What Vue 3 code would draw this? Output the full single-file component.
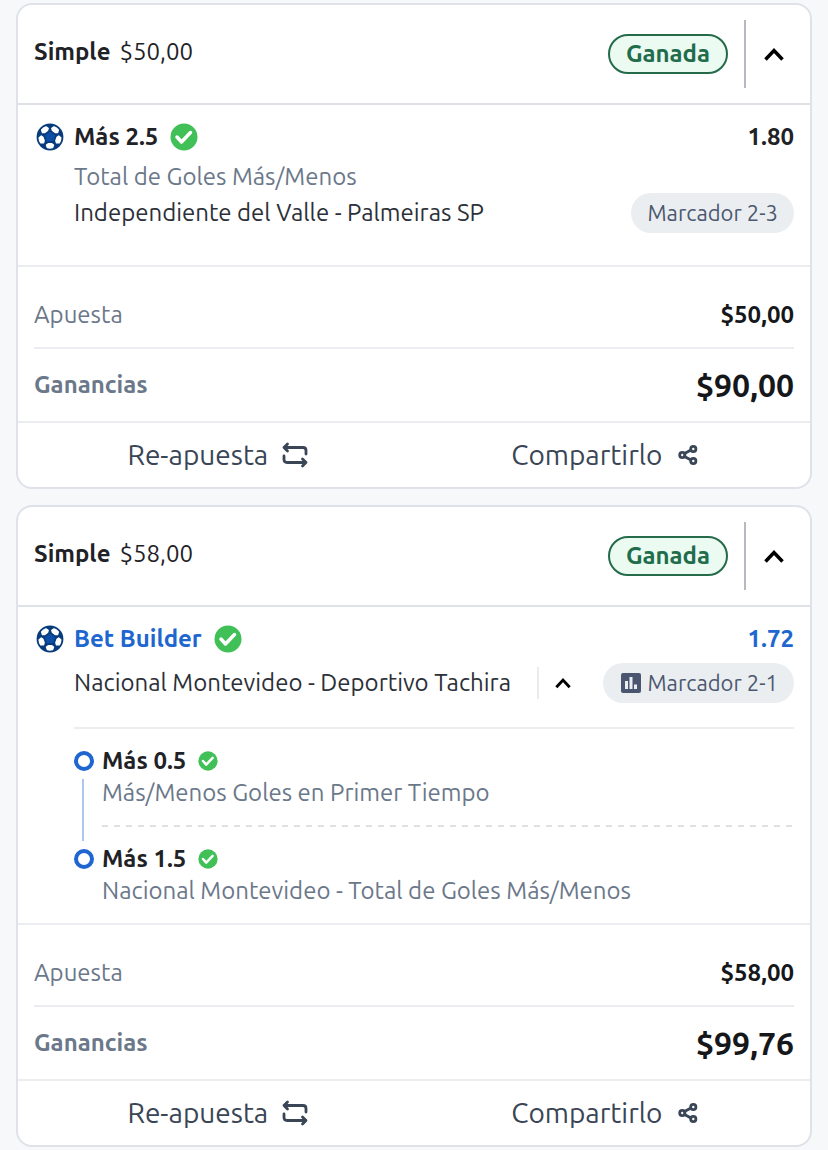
<script setup>
import { reactive } from 'vue'

const bets = reactive([
  {
    id: 1,
    type: 'Simple',
    stake: '$50,00',
    status: 'Ganada',
    open: true,
    title: 'Más 2.5',
    builder: false,
    odds: '1.80',
    market: 'Total de Goles Más/Menos',
    match: 'Independiente del Valle - Palmeiras SP',
    score: 'Marcador 2-3',
    winnings: '$90,00',
    legs: [],
    legsOpen: false,
  },
  {
    id: 2,
    type: 'Simple',
    stake: '$58,00',
    status: 'Ganada',
    open: true,
    title: 'Bet Builder',
    builder: true,
    odds: '1.72',
    market: '',
    match: 'Nacional Montevideo - Deportivo Tachira',
    score: 'Marcador 2-1',
    winnings: '$99,76',
    legs: [
      { pick: 'Más 0.5', market: 'Más/Menos Goles en Primer Tiempo' },
      { pick: 'Más 1.5', market: 'Nacional Montevideo - Total de Goles Más/Menos' },
    ],
    legsOpen: true,
  },
])

const panels = [0, 72, 144, 216, 288]
</script>

<template>
  <main class="bets">
    <article v-for="bet in bets" :key="bet.id" class="bet-card">
      <header class="bet-header">
        <div class="bet-type"><strong>{{ bet.type }}</strong><span>{{ bet.stake }}</span></div>
        <span class="status">{{ bet.status }}</span>
        <button
          type="button"
          class="toggle"
          :aria-expanded="bet.open"
          aria-label="Mostrar detalle"
          @click="bet.open = !bet.open"
        >
          <svg :class="['chevron', { closed: !bet.open }]" viewBox="0 0 24 24">
            <path d="M3.500 17.500L12 8.500L20.500 17.500" />
          </svg>
        </button>
      </header>

      <section v-if="bet.open" class="selection">
        <svg class="ball" viewBox="-14 -14 28 28" aria-hidden="true">
          <circle r="13.400" fill="#073b7c" />
          <path d="M0 -4.800L4.600 -1.500L2.800 3.800H-2.800L-4.600 -1.500Z" fill="#0d4fa6" stroke="#0d4fa6" stroke-linejoin="round" />
          <path
            v-for="a in panels"
            :key="a"
            d="M-1.800 6.800H1.800L3.500 8L2.600 10.500Q0 11.300 -2.600 10.500L-3.500 8Z"
            fill="#fff"
            stroke="#fff"
            stroke-width="1.500"
            stroke-linejoin="round"
            :transform="`rotate(${a})`"
          />
        </svg>

        <div class="selection-body">
          <div class="title-row">
            <strong :class="['title', { blue: bet.builder }]">{{ bet.title }}</strong>
            <svg class="check" viewBox="0 0 28 28" aria-hidden="true">
              <circle cx="14" cy="14" r="13.500" />
              <path d="M7 14L11.500 19L20.500 9.500" />
            </svg>
            <strong :class="['odds', { blue: bet.builder }]">{{ bet.odds }}</strong>
          </div>

          <div v-if="bet.market" class="market">{{ bet.market }}</div>

          <div :class="['match-row', { spaced: bet.builder }]">
            <span class="match">{{ bet.match }}</span>
            <button
              v-if="bet.builder"
              type="button"
              class="toggle small"
              :aria-expanded="bet.legsOpen"
              aria-label="Mostrar selecciones"
              @click="bet.legsOpen = !bet.legsOpen"
            >
              <svg :class="['chevron', { closed: !bet.legsOpen }]" viewBox="0 0 24 24">
                <path d="M4 17L12 8.500L20 17" />
              </svg>
            </button>
            <span class="score">
              <svg v-if="bet.builder" class="stats" viewBox="0 0 20 20" aria-hidden="true">
                <rect width="20" height="20" rx="2" fill="#4a5670" />
                <path d="M4 8h3v8H4zM8.500 4h3v12h-3zM13 11.500h3V16h-3z" fill="#ebeef1" />
              </svg>
              {{ bet.score }}
            </span>
          </div>

          <ul v-if="bet.legs.length && bet.legsOpen" class="legs">
            <li v-for="leg in bet.legs" :key="leg.pick" class="leg">
              <div class="rail">
                <span class="dot"></span>
                <span class="line"></span>
              </div>
              <div class="leg-body">
                <div class="leg-title">
                  <strong>{{ leg.pick }}</strong>
                  <svg class="check small" viewBox="0 0 28 28" aria-hidden="true">
                    <circle cx="14" cy="14" r="13.500" />
                    <path d="M7 14L11.500 19L20.500 9.500" />
                  </svg>
                </div>
                <div class="leg-market">{{ leg.market }}</div>
              </div>
            </li>
          </ul>
        </div>
      </section>

      <dl class="totals">
        <div class="total">
          <dt>Apuesta</dt>
          <dd>{{ bet.stake }}</dd>
        </div>
        <div class="total winnings">
          <dt>Ganancias</dt>
          <dd>{{ bet.winnings }}</dd>
        </div>
      </dl>

      <footer class="actions">
        <button type="button" class="action">
          Re-apuesta
          <svg class="rebet" viewBox="0 0 26 26" aria-hidden="true">
            <path d="M5.500 2L2 5.500L5.500 9M2 5.500H21Q24 5.500 24 8.500V12M20.500 17L24 20.500L20.500 24M24 20.500H5Q2 20.500 2 17.500V14" />
          </svg>
        </button>
        <button type="button" class="action">
          Compartirlo
          <svg class="share" viewBox="0 0 24 24" aria-hidden="true">
            <path d="M8.500 10.500L14.500 7.300M8.500 13.500L14.500 16.700" />
            <circle cx="6.300" cy="12" r="2.600" />
            <circle cx="17.300" cy="6" r="2.600" />
            <circle cx="17.300" cy="18" r="2.600" />
          </svg>
        </button>
      </footer>
    </article>
  </main>
</template>

<style>
body {
  margin: 0;
  background: #f6f8fa;
}
</style>

<style scoped>
.bets {
  display: flex;
  flex-direction: column;
  gap: 16px;
  padding: 3px 16px;
  font-family: Ubuntu, "Noto Sans", sans-serif;
  font-size: 24px;
  line-height: 32px;
  color: #1f2226;
}
button {
  padding: 0;
  border: none;
  background: transparent;
  font: inherit;
  color: inherit;
  cursor: pointer;
}
svg {
  display: block;
  flex: none;
}
.bet-card {
  border: 2px solid #dfe2e8;
  border-radius: 16px;
  background: #fff;
}

.bet-header {
  display: flex;
  align-items: center;
  padding: 15px 8px 15px 16px;
  border-bottom: 2px solid #dfe2e6;
}
.bet-type {
  display: flex;
  flex: 1;
  gap: 9px;
  padding-bottom: 4px;
}
.status {
  margin-right: 16px;
  padding: 2px 16px;
  border: 2px solid #256b4a;
  border-radius: 20px;
  background: #ebfbf2;
  color: #216d4b;
  font-weight: 700;
}
.toggle {
  display: flex;
  align-items: center;
  justify-content: center;
  width: 58px;
  height: 68px;
  border-left: 2px solid #b6babf;
}
.chevron {
  width: 24px;
  height: 24px;
  fill: none;
  stroke: #000;
  stroke-width: 3.5;
}
.toggle.small {
  width: 50px;
  height: 32px;
  margin-left: 26px;
  border-color: #e9ebee;
}
.toggle.small .chevron {
  width: 20px;
  height: 20px;
}
.chevron.closed {
  transform: rotate(180deg);
}

.selection {
  display: flex;
  gap: 10px;
  padding: 16px 16px 0;
}
.ball {
  width: 28px;
  height: 28px;
  margin: 2px 0 0 2px;
}
.selection-body {
  flex: 1;
  min-width: 0;
}
.title-row {
  display: flex;
  align-items: center;
}
.odds {
  margin-left: auto;
}
.blue {
  color: #2066d0;
}
.check {
  width: 28px;
  height: 28px;
  margin-left: 12px;
}
.check circle {
  fill: #40c057;
}
.check path {
  fill: none;
  stroke: #fff;
  stroke-width: 3.5;
  stroke-linecap: round;
  stroke-linejoin: round;
}
.check.small {
  width: 20px;
  height: 20px;
}
.market {
  padding-top: 8px;
  color: #6b788a;
}
.match-row {
  display: flex;
  align-items: center;
  padding-bottom: 32px;
}
.match-row.spaced {
  padding: 8px 0 24px;
}
.match {
  color: #2c3038;
  white-space: nowrap;
}
.score {
  display: flex;
  align-items: center;
  gap: 6px;
  margin-left: auto;
  padding: 4px 16px;
  border-radius: 20px;
  background: #ebeef1;
  color: #4c5870;
  font-size: 22px;
  white-space: nowrap;
}
.stats {
  width: 20px;
  height: 20px;
  margin-left: 2px;
}

.legs {
  margin: 0;
  padding: 16px 0 0;
  border-top: 2px solid #ebedf0;
  list-style: none;
}
.leg {
  display: flex;
  gap: 8px;
}
.rail {
  display: flex;
  flex-direction: column;
  width: 20px;
}
.dot {
  width: 20px;
  height: 20px;
  box-sizing: border-box;
  margin: 6px 0;
  border: 4px solid #2066d0;
  border-radius: 50%;
}
.line {
  flex: 1;
  width: 2px;
  margin: 2px 8px;
  background: #adc8f0;
}
.leg:last-child .line {
  display: none;
}
.leg-body {
  flex: 1;
  padding-bottom: 16px;
}
.leg:not(:last-child) .leg-body {
  padding-bottom: 34px;
  background: repeating-linear-gradient(90deg, #dfe1e5 0 6px, transparent 6px 12px) left bottom 16px / 100% 2px no-repeat;
}
.leg-title {
  display: flex;
  align-items: center;
}
.leg-market {
  color: #6b788a;
}

.totals {
  margin: 0;
  padding: 16px 16px 0;
  border-top: 2px solid #ebedf0;
}
.total {
  display: flex;
  align-items: center;
  justify-content: space-between;
  height: 64px;
}
.total dt {
  color: #6b788a;
}
.total dd {
  margin: 0;
  color: #15171a;
  font-weight: 700;
}
.winnings {
  height: 72px;
  border-top: 2px solid #ebedf0;
}
.winnings dt {
  font-weight: 700;
}
.winnings dd {
  font-size: 32px;
}

.actions {
  display: flex;
  justify-content: space-around;
  padding: 0 8px;
  border-top: 2px solid #ebedf0;
}
.action {
  display: flex;
  align-items: center;
  gap: 14px;
  height: 64px;
  color: #3a4556;
  font-size: 28px;
}
.action svg {
  fill: none;
  stroke: #3a4556;
  stroke-width: 2.8;
  stroke-linecap: round;
  stroke-linejoin: round;
}
.rebet {
  width: 26px;
  height: 26px;
}
.share {
  width: 24px;
  height: 24px;
}
</style>
